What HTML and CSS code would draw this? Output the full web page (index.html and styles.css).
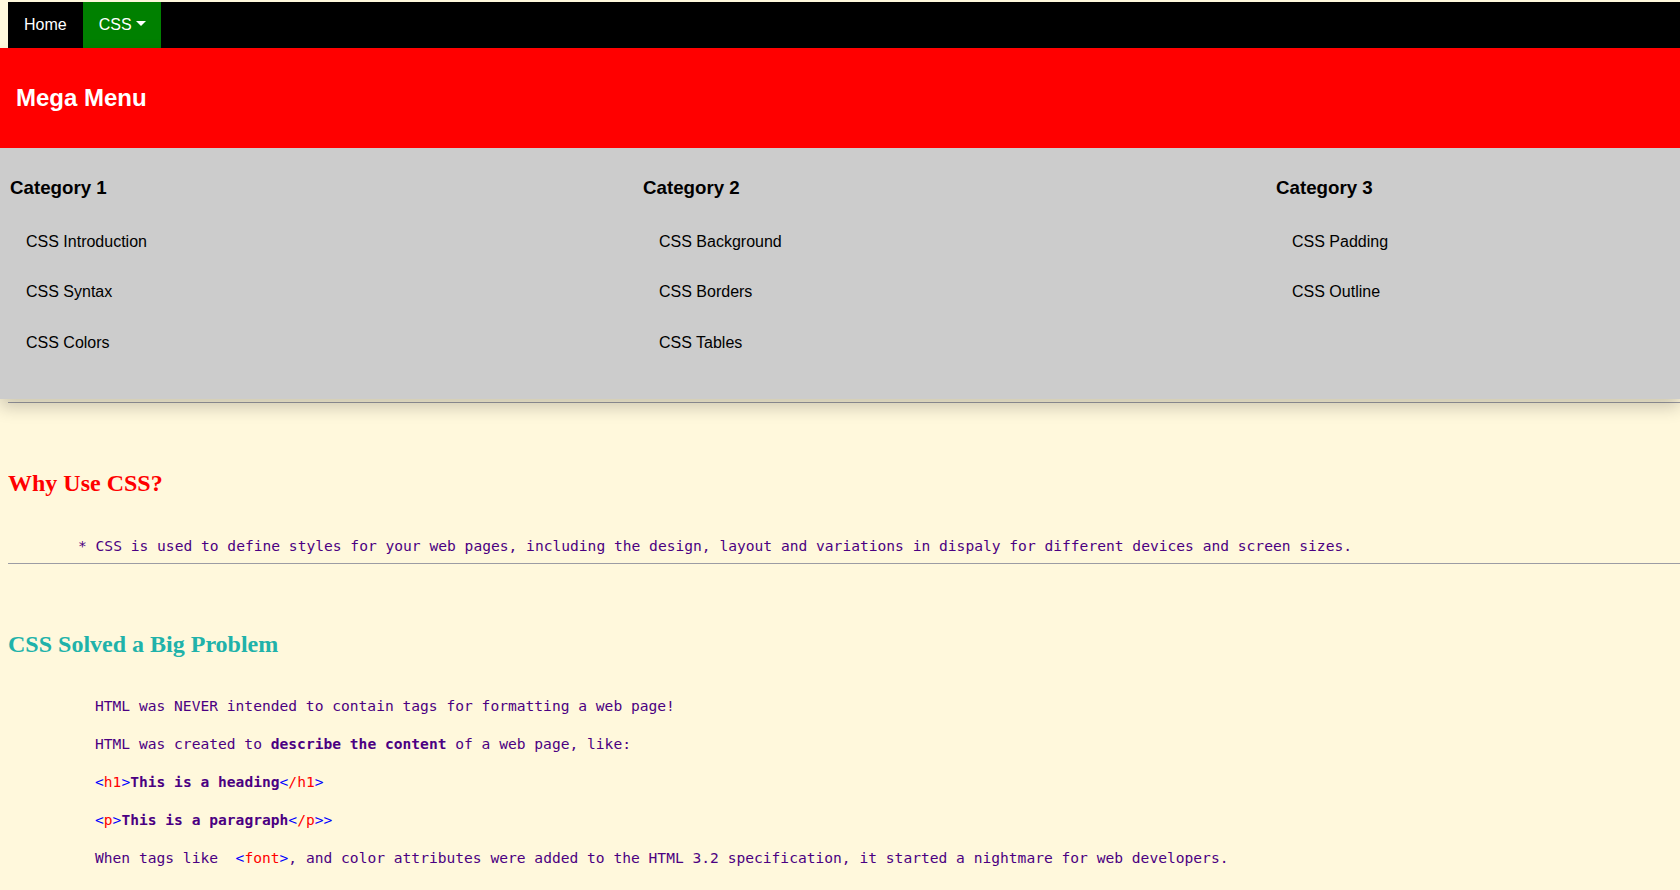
FILE: index.html
```html
<!DOCTYPE html>
<html lang="en">
<head>
<meta charset="utf-8">
<title>Mega Menu</title>
<link rel="stylesheet" href="styles.css">
</head>
<body>
<div class="navbar">
  <a class="nav-link" href="#">Home</a>
  <div class="dropdown">
    <button class="dropbtn">CSS <span class="caret"></span></button>
    <div class="dropdown-content">
      <div class="header">
        <h2>Mega Menu</h2>
      </div>
      <div class="row">
        <div class="column">
          <h3>Category 1</h3>
          <a href="#">CSS Introduction</a>
          <a href="#">CSS Syntax</a>
          <a href="#">CSS Colors</a>
        </div>
        <div class="column">
          <h3>Category 2</h3>
          <a href="#">CSS Background</a>
          <a href="#">CSS Borders</a>
          <a href="#">CSS Tables</a>
        </div>
        <div class="column">
          <h3>Category 3</h3>
          <a href="#">CSS Padding</a>
          <a href="#">CSS Outline</a>
        </div>
      </div>
    </div>
  </div>
</div>

<main class="content">
  <hr class="rule">
  <h2 class="title why">Why Use CSS?</h2>
  <div class="mono bullet">* CSS is used to define styles for your web pages, including the design, layout and variations in dispaly for different devices and screen sizes.</div>
  <hr class="rule">
  <h2 class="title solved">CSS Solved a Big Problem</h2>
  <div class="mono text">
    <p>HTML was NEVER intended to contain tags for formatting a web page!</p>
    <p>HTML was created to <b>describe the content</b> of a web page, like:</p>
    <p><span class="br">&lt;</span><span class="tg">h1</span><span class="br">&gt;</span><b>This is a heading</b><span class="br">&lt;</span><span class="tg">/h1</span><span class="br">&gt;</span></p>
    <p><span class="br">&lt;</span><span class="tg">p</span><span class="br">&gt;</span><b>This is a paragraph</b><span class="br">&lt;</span><span class="tg">/p</span><span class="br">&gt;&gt;</span></p>
    <p>When tags like&nbsp; <span class="br">&lt;</span><span class="tg">font</span><span class="br">&gt;</span>, and color attributes were added to the HTML 3.2 specification, it started a nightmare for web developers.</p>
  </div>
</main>
</body>
</html>
```

FILE: styles.css
```css
* {
  box-sizing: border-box;
}

html {
  overflow: hidden;
}

body {
  margin: 2px 0 0 8px;
  background: #fff8dc;
  font-family: "Liberation Sans", Arial, sans-serif;
}

.navbar {
  display: flex;
  background: #000;
  height: 46px;
}

.nav-link,
.dropbtn {
  display: block;
  font-family: "Liberation Sans", Arial, sans-serif;
  font-size: 16px;
  line-height: 18px;
  color: #fff;
  text-decoration: none;
  padding: 14px 16px;
  border: none;
  margin: 0;
  background: transparent;
}

.dropbtn {
  background: #008000;
  padding-right: 15px;
}

.caret {
  display: inline-block;
  width: 0;
  height: 0;
  border-left: 5px solid transparent;
  border-right: 5px solid transparent;
  border-top: 5px solid #fff;
  vertical-align: 4px;
}

.dropdown-content {
  position: absolute;
  top: 48px;
  left: 0;
  right: 0;
  z-index: 1;
  box-shadow: 0 8px 16px 0 rgba(0, 0, 0, 0.2);
  overflow: hidden;
}

.header {
  background: #ff0000;
  color: #fff;
  padding: 16px;
}

.header h2 {
  margin: 20px 0;
  font-size: 24px;
  font-weight: bold;
  line-height: 28px;
}

.row {
  display: grid;
  grid-template-columns: 633px 633px 1fr;
  background: #ccc;
}

.column {
  height: 251px;
  padding: 10px;
  background: #ccc;
}

.column h3 {
  margin: 18.72px 0;
  font-size: 18.72px;
  line-height: 21.5px;
  font-weight: bold;
  color: #000;
}

.column a {
  display: block;
  padding: 16px;
  font-size: 16px;
  line-height: 18.4px;
  color: #000;
  text-decoration: none;
}

.content {
  margin-top: 354px;
}

.rule {
  height: 0;
  margin: 0;
  border: none;
  border-top: 1px solid #9c9ca4;
}

.title {
  margin: 66px 0 0;
  font-family: "Liberation Serif", "Times New Roman", serif;
  font-size: 24px;
  line-height: 28px;
  font-weight: bold;
}

.why {
  color: #ff0000;
}

.solved {
  color: #20b2aa;
}

.mono {
  font-family: "DejaVu Sans Mono", "Liberation Mono", monospace;
  font-size: 14.6px;
  line-height: 19px;
  color: #4b0082;
}

.bullet {
  margin: 39px 0 8px;
  padding-left: 70px;
}

.text {
  margin-top: 38px;
  padding-left: 87px;
}

.text p {
  margin: 0 0 19px;
}

.br {
  color: #0000ff;
}

.tg {
  color: #ff0000;
}
```
